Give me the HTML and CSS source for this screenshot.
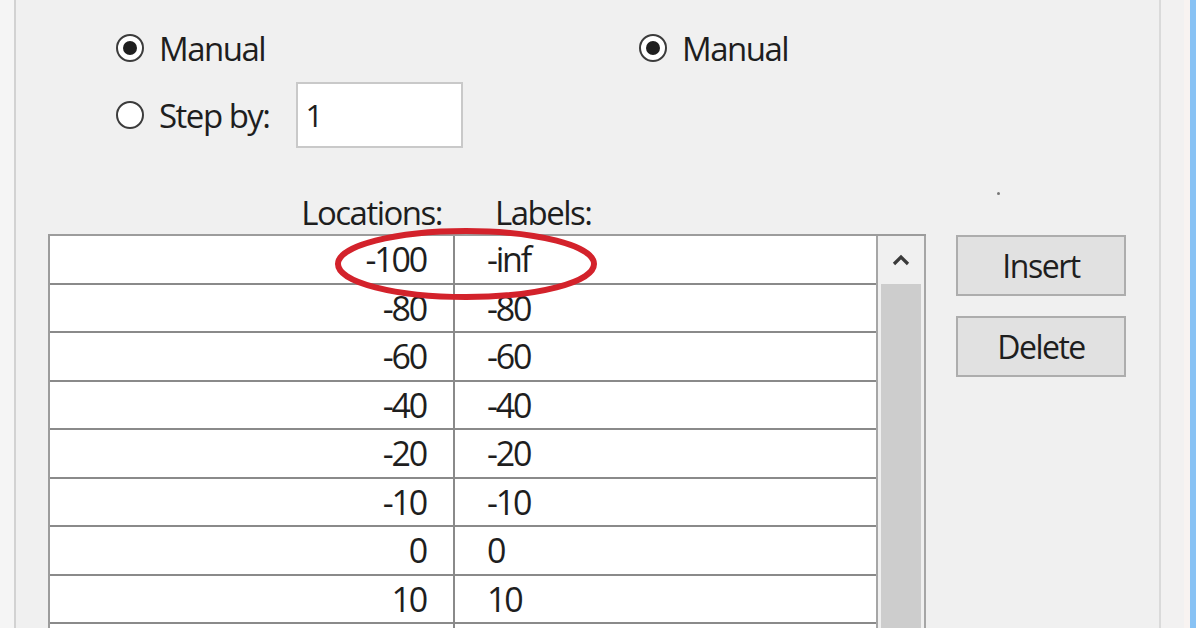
FILE: index.html
```html
<!DOCTYPE html>
<html lang="en">
<head>
  <meta charset="UTF-8">
  <title>Colorbar Ticks</title>
  <link rel="stylesheet" href="styles.css">
</head>
<body>

<div class="window">
  <div class="outer-strip"></div>
  <div class="panel">

    <div class="modes">
      <div class="mode-col left">
        <label class="radio-row">
          <span class="radio checked"></span>
          <span class="radio-text">Manual</span>
        </label>
        <label class="radio-row step">
          <span class="radio"></span>
          <span class="radio-text">Step by:</span>
          <span class="step-input">1</span>
        </label>
      </div>
      <div class="mode-col right">
        <label class="radio-row">
          <span class="radio checked"></span>
          <span class="radio-text">Manual</span>
        </label>
        <span class="speck"></span>
      </div>
    </div>

    <div class="ticks">
      <div class="heads">
        <span class="head-loc">Locations:</span>
        <span class="head-lab">Labels:</span>
      </div>

      <div class="ticks-body">
        <div class="grid">
          <table class="tick-table">
            <tr><td class="loc">-100</td><td class="lab">-inf</td></tr>
            <tr><td class="loc">-80</td><td class="lab">-80</td></tr>
            <tr><td class="loc">-60</td><td class="lab">-60</td></tr>
            <tr><td class="loc">-40</td><td class="lab">-40</td></tr>
            <tr><td class="loc">-20</td><td class="lab">-20</td></tr>
            <tr><td class="loc">-10</td><td class="lab">-10</td></tr>
            <tr><td class="loc">0</td><td class="lab">0</td></tr>
            <tr><td class="loc">10</td><td class="lab">10</td></tr>
            <tr><td class="loc"></td><td class="lab"></td></tr>
          </table>
          <div class="scrollbar">
            <div class="scroll-btn">
              <svg width="20" height="14" viewBox="0 0 20 14">
                <path d="M3 11 L10 4 L17 11" fill="none" stroke="#3a3a3a" stroke-width="3.2"/>
              </svg>
            </div>
            <div class="scroll-thumb"></div>
          </div>

          <!-- marca roja sobre la primera fila -->
          <svg class="highlight" width="280" height="80" viewBox="0 0 280 80">
            <ellipse cx="140" cy="40" rx="128" ry="33" fill="none" stroke="#d3222b" stroke-width="6"/>
          </svg>
        </div>

        <div class="actions">
          <button class="btn">Insert</button>
          <button class="btn">Delete</button>
        </div>
      </div>
    </div>

  </div>
  <div class="edge-light"></div>
  <div class="edge-blue"></div>
</div>

</body>
</html>
```

FILE: styles.css
```css
body {
  margin: 0;
  background-color: #f0f0f0;
  font-family: "Open Sans", "Noto Sans", sans-serif;
  color: #1e1e1e;
  overflow: hidden;
}
.window {
  display: flex;
  height: 628px;
  overflow: hidden;
}
.outer-strip {
  width: 14px;
  flex-shrink: 0;
  background-color: #f5f5f5;
}
.panel {
  width: 1143px;
  flex-shrink: 0;
  border-left: 2px solid #d2d2d2;
  border-right: 2px solid #dadada;
  background-color: #f0f0f0;
}
.edge-light {
  width: 23px;
  flex-shrink: 0;
  background-color: #f2f1f1;
  border-right: 6px solid #f8f3f1;
}
.edge-blue {
  width: 6px;
  flex-shrink: 0;
  background-color: #88c2f4;
}

/* radio buttons */
.modes {
  display: flex;
  padding-top: 30px;
  height: 195px;
  box-sizing: border-box;
}
.mode-col.left {
  margin-left: 100px;
  width: 523px;
}
.mode-col.right {
  position: relative;
  flex: 1;
}
.radio-row {
  display: flex;
  align-items: center;
  height: 36px;
}
.radio-row.step {
  margin-top: 16px;
  height: 66px;
}
.radio {
  width: 24px;
  height: 24px;
  border: 2.5px solid #3c3c3c;
  border-radius: 50%;
  background-color: #fff;
  box-sizing: content-box;
  position: relative;
  margin-right: 15px;
}
.radio.checked::after {
  content: "";
  position: absolute;
  left: 5px;
  top: 5px;
  width: 14px;
  height: 14px;
  border-radius: 50%;
  background-color: #1f1f1f;
}
.radio-text {
  font-size: 33px;
  letter-spacing: -1.5px;
}
.step-input {
  margin-left: 26px;
  width: 155px;
  height: 62px;
  border: 2px solid #c9c9c9;
  background-color: #fff;
  font-size: 31px;
  letter-spacing: -1.5px;
  line-height: 62px;
  padding-left: 8px;
  box-sizing: content-box;
}
.speck {
  position: absolute;
  left: 358px;
  top: 162px;
  width: 3px;
  height: 3px;
  background-color: #777;
  border-radius: 50%;
}

/* tabla de ticks */
.ticks {
  padding-left: 32px;
}
.heads {
  display: flex;
  height: 39px;
  font-size: 33px;
  line-height: 36px;
  letter-spacing: -1.5px;
}
.head-loc {
  width: 394px;
  text-align: right;
}
.head-lab {
  margin-left: 53px;
}
.ticks-body {
  display: flex;
  align-items: flex-start;
}
.grid {
  position: relative;
  display: flex;
  width: 876px;
  height: 420px;
  border-top: 2px solid #9c9c9c;
  border-left: 2px solid #9c9c9c;
  background-color: #fff;
}
.tick-table {
  border-collapse: collapse;
  width: 826px;
  font-size: 34px;
  letter-spacing: -2.2px;
}
.tick-table td {
  height: 46.5px;
  padding: 0;
  border-bottom: 2.5px solid #8a8a8a;
}
.tick-table td.loc {
  width: 404px;
  text-align: right;
  padding-right: 27px;
  box-sizing: border-box;
  border-right: 2px solid #8a8a8a;
}
.tick-table td.lab {
  padding-left: 32px;
}
.scrollbar {
  width: 46px;
  border-left: 2px solid #a6a6a6;
  border-right: 2px solid #a6a6a6;
  background-color: #f0f0f0;
  display: flex;
  flex-direction: column;
}
.scroll-btn {
  height: 48px;
  display: flex;
  justify-content: center;
  align-items: center;
}
.scroll-thumb {
  flex: 1;
  margin: 0 3px;
  background-color: #cdcdcd;
}
.highlight {
  position: absolute;
  left: 276px;
  top: -12px;
}
.actions {
  display: flex;
  flex-direction: column;
  gap: 20px;
  margin-left: 30px;
  margin-top: 1px;
}
.btn {
  width: 170px;
  height: 61px;
  background-color: #e1e1e1;
  border: 2px solid #adadad;
  font-family: "Open Sans", "Noto Sans", sans-serif;
  font-size: 32px;
  letter-spacing: -1.5px;
  color: #1e1e1e;
  padding: 0;
}
```
